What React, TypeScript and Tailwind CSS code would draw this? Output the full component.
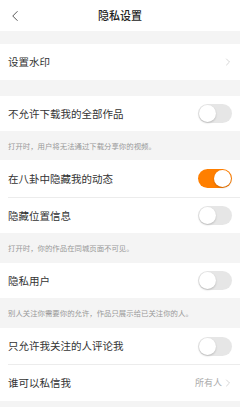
import { ChevronLeft, ChevronRight } from 'lucide-react';

interface ToggleProps {
  on?: boolean;
}

function Toggle({ on = false }: ToggleProps) {
  return (
    <div
      className={`relative w-[34px] h-[19px] rounded-full ${on ? 'bg-[#ff7f00]' : 'bg-[#e6e6e6]'}`}
    >
      <div
        className={`absolute top-[1px] w-[17px] h-[17px] rounded-full bg-white shadow-[0_1px_2px_rgba(0,0,0,0.2)] ${on ? 'right-[1px]' : 'left-[1px]'}`}
      />
    </div>
  );
}

function Row({ label, children, h = 'h-[36px]' }: { label: string; children?: React.ReactNode; h?: string }) {
  return (
    <div className={`flex items-center justify-between bg-white pl-[8px] pr-[8px] ${h}`}>
      <span className="text-[10.5px] text-[#333]">{label}</span>
      {children}
    </div>
  );
}

function Note({ text, h = 'h-[30px]' }: { text: string; h?: string }) {
  return (
    <div className={`flex items-center px-[8px] ${h}`}>
      <span className="text-[7.4px] text-[#999]">{text}</span>
    </div>
  );
}

export default function App() {
  return (
    <div
      className="w-[240px] h-[407px] overflow-hidden bg-[#f4f4f4]"
      style={{ fontFamily: '"Noto Sans CJK SC", "Noto Sans", sans-serif' }}
    >
      <div className="relative flex items-center justify-center h-[31px] bg-white">
        <ChevronLeft size={18} strokeWidth={1.3} className="absolute left-[6px] text-[#555]" />
        <span className="text-[11px] font-medium text-[#222]">隐私设置</span>
      </div>
      <div className="h-[13px]" />
      <Row label="设置水印">
        <ChevronRight size={12} strokeWidth={1.2} className="text-[#bbb] -mr-[2px]" />
      </Row>
      <div className="h-[16px]" />
      <Row label="不允许下载我的全部作品" h="h-[35px]">
        <Toggle />
      </Row>
      <Note text="打开时，用户将无法通过下载分享你的视频。" h="h-[29px]" />
      <Row label="在八卦中隐藏我的动态" h="h-[37px]">
        <Toggle on />
      </Row>
      <div className="bg-white pl-[8px]">
        <div className="h-px bg-[#ececec]" />
      </div>
      <Row label="隐藏位置信息" h="h-[35px]">
        <Toggle />
      </Row>
      <Note text="打开时，你的作品在同城页面不可见。" />
      <Row label="隐私用户" h="h-[35px]">
        <Toggle />
      </Row>
      <Note text="别人关注你需要你的允许，作品只展示给已关注你的人。" />
      <Row label="只允许我关注的人评论我">
        <Toggle />
      </Row>
      <div className="bg-white pl-[8px]">
        <div className="h-px bg-[#ececec]" />
      </div>
      <Row label="谁可以私信我">
        <div className="flex items-center">
          <span className="text-[9px] text-[#aaa]">所有人</span>
          <ChevronRight size={12} strokeWidth={1.2} className="text-[#bbb] -mr-[2px]" />
        </div>
      </Row>
    </div>
  );
}
